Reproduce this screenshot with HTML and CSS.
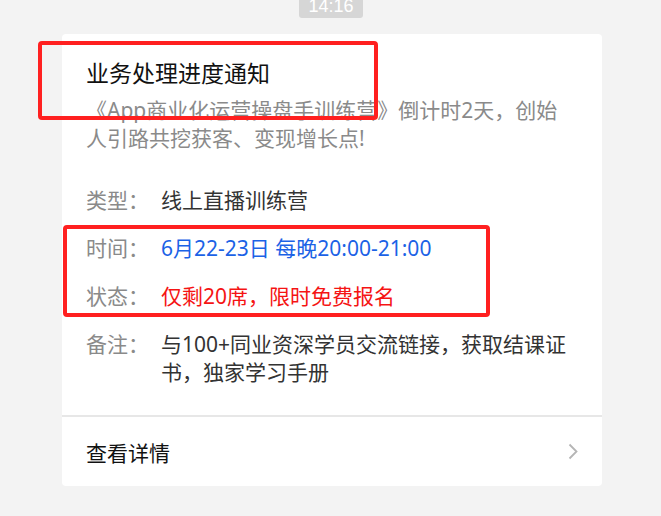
FILE: index.html
```html
<!DOCTYPE html>
<html lang="zh-CN">
<head>
    <meta charset="UTF-8">
    <meta name="viewport" content="width=device-width, initial-scale=1.0">
    <title>业务处理进度通知</title>
    <link rel="stylesheet" href="styles.css">
</head>
<body>

    <div class="time-badge">14:16</div>

    <div class="msg-card">
        <div class="msg-body">
            <h2 class="msg-title">业务处理进度通知</h2>
            <p class="msg-desc">《App商业化运营操盘手训练营》倒计时2天，创始人引路共挖获客、变现增长点!</p>

            <div class="msg-rows">
                <div class="msg-row">
                    <span class="label">类型：</span>
                    <span class="value">线上直播训练营</span>
                </div>
                <div class="msg-row">
                    <span class="label">时间：</span>
                    <span class="value blue">6月22-23日 每晚20:00-21:00</span>
                </div>
                <div class="msg-row">
                    <span class="label">状态：</span>
                    <span class="value red">仅剩20席，限时免费报名</span>
                </div>
                <div class="msg-row">
                    <span class="label">备注：</span>
                    <span class="value">与100+同业资深学员交流链接，获取结课证书，独家学习手册</span>
                </div>
            </div>
        </div>

        <div class="msg-footer">
            <span>查看详情</span>
            <svg class="chevron" width="10" height="17" viewBox="0 0 10 17">
                <path d="M1.5 1.5 L8.5 8.5 L1.5 15.5" fill="none" stroke="#b5b5b5" stroke-width="1.8"/>
            </svg>
        </div>
    </div>

    <!-- annotation boxes drawn over the card -->
    <div class="mark mark-title"></div>
    <div class="mark mark-rows"></div>

</body>
</html>
```

FILE: styles.css
```css
body {
    margin: 0;
    background-color: #f3f3f3;
    font-family: "Noto Sans", "Noto Sans CJK SC", sans-serif;
    position: relative;
    min-height: 516px;
}

.time-badge {
    width: 64px;
    height: 18px;
    margin: 0 auto 0 299px;
    background-color: #d6d6d6;
    color: #fff;
    font-family: "Liberation Sans", sans-serif;
    font-size: 18px;
    line-height: 12px;
    text-align: center;
    overflow: hidden;
    border-radius: 0 0 3px 3px;
}

.msg-card {
    width: 540px;
    margin: 16px 0 0 62px;
    background-color: #fff;
    border-radius: 4px;
}

.msg-body {
    padding: 23px 24px 29px 24px;
}

.msg-title {
    margin: 0 0 7px 0;
    font-size: 23px;
    font-weight: normal;
    line-height: 32px;
    color: #111;
}

.msg-desc {
    margin: 0 0 34px 0;
    font-size: 21px;
    line-height: 28px;
    color: #8a8a8a;
}

.msg-rows {
    display: flex;
    flex-direction: column;
    gap: 20px;
}

.msg-row {
    display: grid;
    grid-template-columns: 75px 1fr;
    font-size: 21px;
    line-height: 28px;
}

.label {
    color: #8a8a8a;
}

.value {
    color: #333;
}

.value.blue {
    color: #1b62e6;
}

.value.red {
    color: #f51414;
}

.msg-footer {
    border-top: 2px solid #e7e7e7;
    height: 69px;
    padding: 0 24px;
    display: flex;
    align-items: center;
    justify-content: space-between;
    font-size: 21px;
    color: #111;
}

.mark {
    position: absolute;
    border: 4px solid #ff2020;
    border-radius: 4px;
}

.mark-title {
    left: 38px;
    top: 41px;
    width: 332px;
    height: 71px;
}

.mark-rows {
    left: 63px;
    top: 225px;
    width: 419px;
    height: 84px;
}
```
